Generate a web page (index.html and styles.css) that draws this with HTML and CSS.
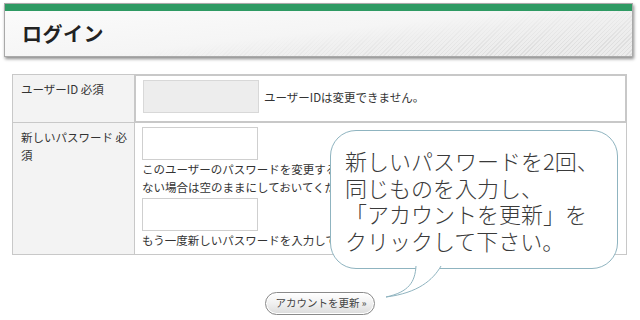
FILE: index.html
```html
<!DOCTYPE html>
<html lang="ja">
<head>
<meta charset="utf-8">
<title>ログイン</title>
<link rel="stylesheet" href="styles.css">
</head>
<body>
<div class="header">
  <div class="header-bar"></div>
  <div class="header-body"><h1 class="title">ログイン</h1></div>
</div>

<table class="form">
  <tr>
    <th class="label">ユーザーID 必須</th>
    <td class="value value-first">
      <span class="input input-disabled"></span><span class="note-inline">ユーザーIDは変更できません。</span>
    </td>
  </tr>
  <tr>
    <th class="label">新しいパスワード 必須</th>
    <td class="value value-second">
      <span class="input"></span>
      <p class="note">このユーザーのパスワードを変更する場合は新しいパスワードを入力してください。変更しない場合は空のままにしておいてください。</p>
      <span class="input"></span>
      <p class="note">もう一度新しいパスワードを入力してください。</p>
    </td>
  </tr>
</table>

<div class="actions">
  <button class="submit">アカウントを更新 <span class="raquo">»</span></button>
</div>

<div class="bubble">
  <p class="bubble-text">新しいパスワードを2回、<br>同じものを入力し、<br>「アカウントを更新」を<br>クリックして下さい。</p>
  <svg class="tail" width="70" height="40" viewBox="0 0 70 40">
    <path d="M33 0 C32 16 26 26 3 31 C35 27 50 14 58 0" fill="#fff" stroke="#8fb4c0" stroke-width="1"/>
  </svg>
</div>
</body>
</html>
```

FILE: styles.css
```css
html, body {
  margin: 0;
  padding: 0;
  background: #fff;
}
body {
  width: 640px;
  height: 320px;
  overflow: hidden;
  position: relative;
  font-family: "Noto Sans CJK JP", "Noto Sans", sans-serif;
  color: #333;
}

.header {
  margin: 3px 7px 0 4px;
  border: 1px solid #a9a9a9;
  box-shadow: 1px 2px 3px rgba(0, 0, 0, 0.45);
}
.header-bar {
  height: 7px;
  background: #2e9a63;
}
.header-body {
  height: 45px;
  display: flex;
  align-items: center;
  padding-left: 17px;
  background:
    linear-gradient(174deg, #fbfbfb 0%, #f5f5f5 48%, rgba(242, 242, 242, 0.7) 62%, rgba(238, 238, 238, 0.25) 85%),
    repeating-linear-gradient(135deg, #ececec 0px, #ececec 2px, #dadada 2px, #dadada 3px);
}
.title {
  margin: 0;
  font-size: 20px;
  font-weight: bold;
  color: #222;
  letter-spacing: 0.5px;
}

.form {
  margin: 17px 0 0 12px;
  width: 615px;
  border-collapse: collapse;
  border: 1px solid #c8c8c8;
  font-size: 11.5px;
}
.label {
  width: 107px;
  padding: 5px 6px 0 8px;
  background: #f3f3f3;
  border: 1px solid #c8c8c8;
  text-align: left;
  vertical-align: top;
  font-weight: normal;
  line-height: 18px;
  color: #333;
}
.value {
  padding: 0 7px;
  border: 1px solid #c8c8c8;
  vertical-align: top;
}
.value-first {
  padding-top: 4px;
  padding-bottom: 8px;
  display: flex;
  align-items: center;
  gap: 5px;
}
.value-second {
  padding-top: 4px;
  padding-bottom: 5px;
}
.input {
  display: block;
  width: 114px;
  height: 31px;
  border: 1px solid #cfcfcf;
  background: #fff;
}
.input-disabled {
  background: #ededed;
  border-color: #d8d8d8;
}
.note-inline {
  line-height: 18px;
}
.note {
  margin: 0 0 2px 0;
  line-height: 18px;
}
.note:last-child {
  margin-bottom: 0;
}

.actions {
  display: flex;
  justify-content: center;
  margin-top: 37px;
}
.submit {
  height: 23px;
  padding: 0 7px 0 9px;
  border: 1.5px solid #8a8a8a;
  border-radius: 12px;
  background: linear-gradient(#ffffff, #f0f0f0 50%, #dcdcdc);
  box-shadow: inset 0 0 0 1px #fff;
  font-family: "Noto Sans CJK JP", "Noto Sans", sans-serif;
  font-size: 10.5px;
  color: #444;
  line-height: 20px;
}
.raquo {
  font-size: 9px;
  font-weight: bold;
  color: #666;
}

.bubble {
  position: absolute;
  left: 330px;
  top: 130px;
  width: 286px;
  height: 137px;
  border: 1px solid #8fb4c0;
  border-radius: 26px;
  background: #fff;
}
.bubble-text {
  margin: 0;
  padding: 16px 0 0 14px;
  font-size: 22px;
  line-height: 26.5px;
  font-weight: 300;
  color: #3a3a3a;
  white-space: nowrap;
}
.tail {
  position: absolute;
  left: 52px;
  top: 135px;
  overflow: visible;
}
```
